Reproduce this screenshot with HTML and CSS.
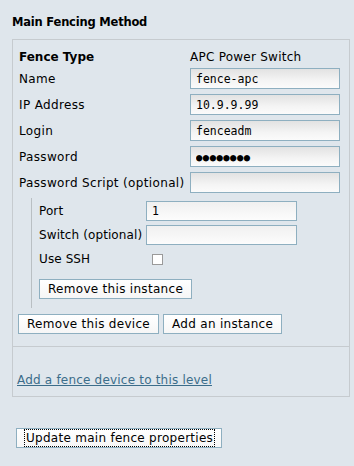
FILE: index.html
```html
<!DOCTYPE html>
<html>
<head>
<meta charset="utf-8">
<link rel="stylesheet" href="styles.css">
</head>
<body>
<div class="page">
  <h2 class="title">Main Fencing Method</h2>
  <div class="box">
    <div class="main">
      <div class="row head"><span class="lbl strong">Fence Type</span><span class="val">APC Power Switch</span></div>
      <div class="row"><label class="lbl">Name</label><input class="field" value="fence-apc"></div>
      <div class="row"><label class="lbl">IP Address</label><input class="field" value="10.9.9.99"></div>
      <div class="row"><label class="lbl">Login</label><input class="field" value="fenceadm"></div>
      <div class="row"><label class="lbl">Password</label><input class="field dots" value="●●●●●●●●"></div>
      <div class="row"><label class="lbl">Password Script (optional)</label><input class="field" value=""></div>
      <div class="inst">
        <div class="irow"><label class="ilbl">Port</label><input class="field ifield" value="1"></div>
        <div class="irow"><label class="ilbl">Switch (optional)</label><input class="field ifield" value=""></div>
        <div class="irow ssh"><label class="ilbl">Use SSH</label><span class="check"></span></div>
        <div class="ibtns"><button class="btn">Remove this instance</button></div>
      </div>
      <div class="btns"><button class="btn">Remove this device</button><button class="btn">Add an instance</button></div>
    </div>
    <div class="foot"><a class="link" href="#">Add a fence device to this level</a></div>
  </div>
  <button class="btn update"><span class="focus">Update main fence properties</span></button>
</div>
</body>
</html>
```
FILE: styles.css
```css
html, body {
  margin: 0;
  padding: 0;
  background: #dfe6ec;
}
body {
  font-family: "DejaVu Sans", Verdana, sans-serif;
  font-size: 12px;
  letter-spacing: 0.35px;
  color: #000;
  width: 354px;
  height: 466px;
  overflow: hidden;
}
.page {
  padding: 0 4px 0 12px;
}
.title {
  margin: 0 0 10px 0;
  padding-top: 15px;
  font-size: 11.5px;
  letter-spacing: -0.2px;
  line-height: 14px;
  font-weight: bold;
}
.box {
  border: 1px solid #c6cbcf;
}
.main {
  padding: 9px 6px 12px 6px;
  border-bottom: 1px solid #c6cbcf;
}
.row {
  display: flex;
  align-items: center;
  height: 21px;
  margin-bottom: 5px;
}
.row.head {
  height: 16px;
  margin-bottom: 3px;
}
.lbl {
  width: 171px;
  flex: none;
  line-height: 14px;
  white-space: nowrap;
}
.strong {
  font-weight: bold;
  letter-spacing: 0;
}
.val {
  line-height: 14px;
  letter-spacing: 0.25px;
}
.field {
  box-sizing: border-box;
  width: 150px;
  height: 21px;
  margin: 0;
  padding: 0 5px;
  border: 1px solid #8eafc0;
  border-radius: 0;
  background: linear-gradient(to bottom, #e2e2e2 0%, #f4f4f4 60%, #fbfbfb 100%);
  font-family: "DejaVu Sans Mono", monospace;
  font-size: 11.5px;
  letter-spacing: 0;
  color: #000;
  outline: none;
}
.dots {
  font-size: 10.5px;
  letter-spacing: 0.5px;
}
.inst {
  margin: 4px 0 0 12px;
  padding: 3px 0 9px 7px;
  border-left: 1px solid #b9bfc3;
}
.irow {
  display: flex;
  align-items: center;
  height: 20px;
  margin-bottom: 4px;
}
.irow.ssh {
  margin-top: 2px;
  margin-bottom: 10px;
}
.ilbl {
  width: 107px;
  flex: none;
  line-height: 14px;
  letter-spacing: 0.1px;
  white-space: nowrap;
}
.ifield {
  width: 151px;
  height: 20px;
  background: linear-gradient(to bottom, #f0f0f0 0%, #fcfcfc 100%);
}
.check {
  box-sizing: border-box;
  width: 11px;
  height: 11px;
  margin-left: 6px;
  border: 1px solid #9a9a9a;
  background: #fff;
}
.ibtns {
  display: flex;
}
.btn {
  box-sizing: border-box;
  height: 20px;
  margin: 0;
  padding: 0 8px;
  border: 1px solid #8eafc0;
  border-radius: 0;
  background: linear-gradient(to bottom, #ffffff 0%, #f6f6f6 100%);
  font-family: "DejaVu Sans", Verdana, sans-serif;
  font-size: 12px;
  letter-spacing: 0.3px;
  line-height: 16px;
  color: #000;
  white-space: nowrap;
}
.btns {
  display: flex;
  gap: 4px;
  margin-top: 6px;
  margin-left: -1px;
}
.foot {
  padding: 26px 5px 9px 4px;
  line-height: 14px;
}
.link {
  color: #3b6d8a;
  letter-spacing: 0.2px;
  text-decoration: underline;
}
.update {
  display: block;
  margin: 31px 0 0 4px;
  padding: 0 6px 0 7px;
  letter-spacing: 0.28px;
}
.focus {
  display: block;
  border: 1px dotted #000;
  padding: 0 1px;
  line-height: 16px;
}
```
